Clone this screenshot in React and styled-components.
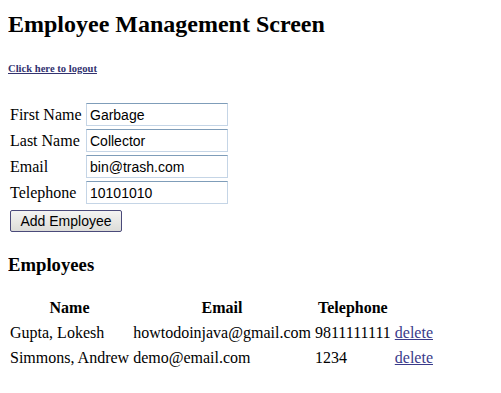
import React from "react";
import styled, { createGlobalStyle } from "styled-components";

const Global = createGlobalStyle`
  html, body { background: #fff; }
  body {
    margin: 8px;
    font-family: "Liberation Serif", "Times New Roman", serif;
    font-size: 16px;
    color: #000;
  }
`;

const Title = styled.h1`
  margin: 2px 0 0;
  font-size: 24px;
  line-height: 28px;
  font-weight: bold;
`;

const Logout = styled.a`
  display: inline-block;
  margin-top: 25px;
  font-size: 10.6px;
  line-height: 12px;
  font-weight: bold;
  color: #333370;
  text-decoration: underline;
`;

const Form = styled.div`
  display: grid;
  grid-template-columns: 72px 142px;
  column-gap: 4px;
  row-gap: 3px;
  margin-top: 27px;
  padding-left: 2px;
  align-items: center;
`;

const Label = styled.label`
  font-size: 16px;
  line-height: 23px;
`;

const Input = styled.input`
  box-sizing: border-box;
  width: 142px;
  height: 23px;
  padding: 1px 3px;
  border: 1px solid #c5d5e6;
  border-top-color: #7f9db9;
  font-family: "Liberation Sans", Arial, sans-serif;
  font-size: 14px;
  color: #000;
  outline: none;
`;

const Button = styled.button`
  display: block;
  box-sizing: border-box;
  margin: 6px 0 0 2px;
  width: 112px;
  height: 22px;
  padding: 0;
  border: 1px solid #4a4a7a;
  border-radius: 2px;
  background: linear-gradient(#f4f4f2, #dcdcd8);
  font-family: "Liberation Sans", Arial, sans-serif;
  font-size: 14px;
  color: #000;
`;

const Sub = styled.h3`
  margin: 22px 0 0;
  font-size: 18.7px;
  line-height: 22px;
  font-weight: bold;
`;

const Table = styled.table`
  margin-top: 19px;
  border-collapse: separate;
  border-spacing: 2px;
  margin-left: -1px;
`;

const Th = styled.th`
  font-weight: bold;
  text-align: center;
  padding: 1px;
  line-height: 20px;
  font-size: 16px;
`;

const Td = styled.td`
  padding: 1px;
  line-height: 21px;
  font-size: 16px;
  white-space: nowrap;
`;

const Link = styled.a`
  color: #3a3a8a;
  text-decoration: underline;
`;

const employees = [
  { name: "Gupta, Lokesh", email: "howtodoinjava@gmail.com", tel: "9811111111" },
  { name: "Simmons, Andrew", email: "demo@email.com", tel: "1234" },
];

export default function App() {
  return (
    <>
      <Global />
      <Title>Employee Management Screen</Title>
      <Logout href="#">Click here to logout</Logout>
      <Form>
        <Label>First Name</Label>
        <Input defaultValue="Garbage" />
        <Label>Last Name</Label>
        <Input defaultValue="Collector" />
        <Label>Email</Label>
        <Input defaultValue="bin@trash.com" />
        <Label>Telephone</Label>
        <Input defaultValue="10101010" />
      </Form>
      <Button>Add Employee</Button>
      <Sub>Employees</Sub>
      <Table>
        <thead>
          <tr>
            <Th>Name</Th>
            <Th>Email</Th>
            <Th>Telephone</Th>
            <Th></Th>
          </tr>
        </thead>
        <tbody>
          {employees.map((e) => (
            <tr key={e.name}>
              <Td>{e.name}</Td>
              <Td>{e.email}</Td>
              <Td>{e.tel}</Td>
              <Td>
                <Link href="#">delete</Link>
              </Td>
            </tr>
          ))}
        </tbody>
      </Table>
    </>
  );
}
